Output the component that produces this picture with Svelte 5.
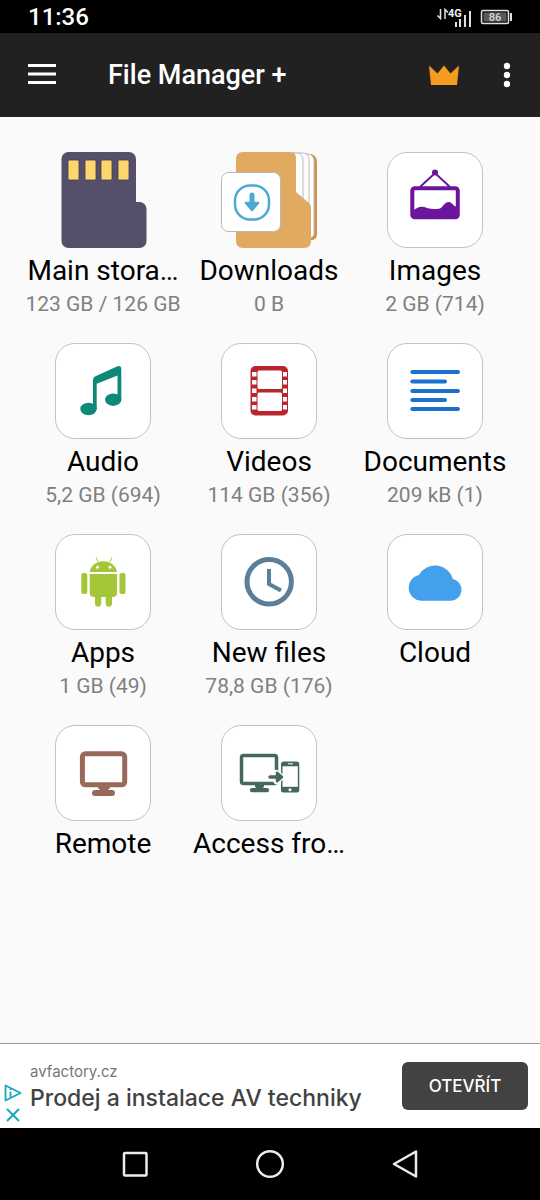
<script lang="ts">
  interface Category {
    id: string;
    label: string;
    info?: string;
    framed: boolean;
  }

  const categories: Category[] = [
    { id: 'storage', label: 'Main stora…', info: '123 GB / 126 GB', framed: false },
    { id: 'downloads', label: 'Downloads', info: '0 B', framed: false },
    { id: 'images', label: 'Images', info: '2 GB (714)', framed: true },
    { id: 'audio', label: 'Audio', info: '5,2 GB (694)', framed: true },
    { id: 'videos', label: 'Videos', info: '114 GB (356)', framed: true },
    { id: 'documents', label: 'Documents', info: '209 kB (1)', framed: true },
    { id: 'apps', label: 'Apps', info: '1 GB (49)', framed: true },
    { id: 'recent', label: 'New files', info: '78,8 GB (176)', framed: true },
    { id: 'cloud', label: 'Cloud', framed: true },
    { id: 'remote', label: 'Remote', framed: true },
    { id: 'access', label: 'Access fro…', framed: true },
  ];

  const contacts = [13, 30, 46, 63];
  const perforations = [29, 37, 45.5, 54, 62];
  const textLines = [
    { y: 29, end: 71 },
    { y: 38.5, end: 58 },
    { y: 48, end: 71 },
    { y: 57, end: 58 },
    { y: 66, end: 71 },
  ];
</script>

<div class="screen">
  <div class="status">
    <span class="time">11:36</span>
    <svg class="status-icons" viewBox="0 0 80 24" width="80" height="24">
      <g fill="none" stroke="#e6e6e6" stroke-width="1.5">
        <path d="M4.500 4v9.500l-3-3M9 14V4.500l3 3" />
      </g>
      <text x="12" y="12" class="network">4G</text>
      <g fill="#e0e0e0">
        <rect x="19" y="17" width="2" height="5" />
        <rect x="23" y="14" width="2" height="8" />
        <rect x="28" y="10" width="2" height="12" />
        <rect x="33" y="6" width="2" height="16" />
      </g>
      <rect x="45.500" y="5.500" width="27" height="13" rx="1.500" fill="#111" stroke="#e0e0e0" stroke-width="1.500" />
      <rect x="47.500" y="7.500" width="23" height="9" fill="#5a5a5a" />
      <rect x="74" y="8" width="2" height="8" fill="#e0e0e0" />
      <text x="59" y="16" text-anchor="middle" class="battery">86</text>
    </svg>
  </div>

  <header class="toolbar">
    <button class="tool" aria-label="Menu">
      <svg viewBox="0 0 28 28" width="28" height="28" fill="#fff">
        <path d="M0 3h28v3H0zM0 11.500h28v3H0zM0 20h28v3H0z" />
      </svg>
    </button>
    <h1>File Manager +</h1>
    <button class="tool" aria-label="Premium">
      <svg viewBox="0 0 32 28" width="32" height="28">
        <path d="M1 4.500l8.500 8L16 4.500l6.500 8 8.500-8-2 19.500H3z" fill="#f39c1f" />
      </svg>
    </button>
    <button class="tool more" aria-label="More options">
      <svg viewBox="0 0 8 28" width="8" height="28" fill="#fff">
        <circle cx="4" cy="5" r="3.200" />
        <circle cx="4" cy="14" r="3.200" />
        <circle cx="4" cy="23" r="3.200" />
      </svg>
    </button>
  </header>

  <main class="grid">
    {#each categories as category (category.id)}
      <button class="category">
        <span class="tile" class:framed={category.framed}>
          <svg viewBox="0 0 96 96" width="96" height="96">
            {#if category.id === 'storage'}
              <path d="M13.500 0H74a7 7 0 0 1 7 7v43h3.500a7 7 0 0 1 7 7v32a7 7 0 0 1-7 7h-71a7 7 0 0 1-7-7V7a7 7 0 0 1 7-7z" fill="#54506a" />
              {#each contacts as x}
                <rect {x} y="8" width="11" height="20" rx="1.500" fill="#ffd66b" stroke="#403c50" stroke-width="0.800" />
              {/each}
            {:else if category.id === 'downloads'}
              <path d="M72 2h18q6 2 6 8v72q0 6-6 6H72z" fill="#d09244" />
              <path d="M71 2h16q6 1 6 7v73q0 3-4 4H71z" fill="#fff" stroke="#b9b9c2" />
              <path d="M71 1h11q6 1 6 7v79H71z" fill="#fff" stroke="#b9b9c2" />
              <path d="M71 1h5q6 1 6 7v79H71z" fill="#fff" stroke="#b9b9c2" />
              <path d="M22 0h47q6 0 6 6v34l13 11q2 2 2 5v33q0 7-7 7H22q-7 0-7-7V7q0-7 7-7z" fill="#e0aa61" />
              <rect x="0.500" y="20.500" width="59" height="59" rx="7" fill="#fff" stroke="#b8b8bc" />
              <rect x="14" y="33.500" width="34" height="34" rx="15" fill="none" stroke="#4bacd1" stroke-width="2.500" />
              <path d="M31 43v9" stroke="#4bacd1" stroke-width="5" stroke-linecap="round" />
              <path d="M25 51h12l-6 7z" fill="#4bacd1" stroke="#4bacd1" stroke-width="2.500" stroke-linejoin="round" />
            {:else if category.id === 'images'}
              <g fill="none" stroke="#6a159c">
                <path d="M33 35l15-14 15 14" stroke-width="2" />
                <rect x="25.300" y="36.300" width="45.500" height="29" rx="2.500" stroke-width="4" />
              </g>
              <circle cx="48" cy="20.500" r="3" fill="#6a159c" />
              <path d="M26 59c3-3 7-5 11-4 4 1 6 2 10 2 4 0 6 0 8-2 2-3 4-5 7-5s4 4 8 5v10H26z" fill="#6a159c" />
            {:else if category.id === 'audio'}
              <g fill="#0b8a7a">
                <ellipse cx="33.500" cy="66" rx="8.200" ry="6.200" />
                <ellipse cx="58.200" cy="56.700" rx="8.200" ry="6.200" />
                <path d="M38 66V37q0-3 3-4l21-9.500q4.300-1.500 4.300 2.500v31h-3.800V32.500l-20.800 8.200V66z" />
              </g>
            {:else if category.id === 'videos'}
              <rect x="29.500" y="23" width="37.500" height="49.500" rx="5" fill="#b9252d" />
              <g fill="#fff">
                <rect x="36.500" y="27.500" width="24.500" height="18.500" rx="1.500" />
                <rect x="36.500" y="49.500" width="24.500" height="18.500" rx="1.500" />
                {#each perforations as y}
                  <rect x="31" {y} width="4.500" height="4.500" />
                  <rect x="62" {y} width="4" height="4.500" />
                {/each}
              </g>
            {:else if category.id === 'documents'}
              <g stroke="#1a72cf" stroke-width="4" stroke-linecap="round">
                {#each textLines as line}
                  <path d="M25.300 {line.y}H{line.end}" />
                {/each}
              </g>
            {:else if category.id === 'apps'}
              <g fill="#a4c639">
                <path d="M34.700 38a13.700 11.700 0 0 1 27.300 0z" />
                <path d="M34.700 40H62v19q0 4-4 4h-1v6.500a3 3 0 0 1-6.300 0V63h-4.500v6.500a3 3 0 0 1-6.200 0V63h-1.300q-4 0-4-4z" />
                <rect x="26.300" y="39" width="6" height="21" rx="2" />
                <rect x="64.500" y="39" width="6" height="21" rx="2" />
              </g>
              <path d="M41 23.500l2 4M57 23.500l-2 4" stroke="#a4c639" stroke-width="1" />
              <circle cx="42.500" cy="33.300" r="1.500" fill="#fff" />
              <circle cx="55" cy="33.300" r="1.500" fill="#fff" />
            {:else if category.id === 'recent'}
              <g fill="none" stroke="#5b7f99">
                <circle cx="48.200" cy="47.700" r="22.200" stroke-width="5" />
                <path d="M48 35v15l12 6.500" stroke-width="4" />
              </g>
            {:else if category.id === 'cloud'}
              <path d="M34 66.700a13 13 0 0 1-2-25.700a18.500 18.500 0 0 1 34 4a11 11 0 0 1-2 21.700z" fill="#42a0ec" />
            {:else if category.id === 'remote'}
              <rect x="27.400" y="28.800" width="42.300" height="31" rx="3" fill="none" stroke="#986958" stroke-width="5" />
              <path d="M43 61h12v2l-2 2h4a3 3 0 0 1 0 6H40a3 3 0 0 1 0-6h5l-2-2z" fill="#986958" />
            {:else}
              <rect x="20.500" y="30.500" width="35" height="28" rx="2" fill="none" stroke="#45685c" stroke-width="3.500" />
              <path d="M34 60h9v1.500l-1 1.500h4a2.100 2.100 0 0 1 0 4.300H31a2.100 2.100 0 0 1 0-4.300h4l-1-1.500z" fill="#45685c" />
              <rect x="58" y="35" width="22" height="34" rx="3" fill="#fff" />
              <rect x="60" y="36.500" width="18.300" height="31" rx="2.500" fill="#45685c" />
              <rect x="61.500" y="41.300" width="15.300" height="20.500" fill="#fff" />
              <path d="M67 38.800h5" stroke="#fff" stroke-width="1" />
              <circle cx="69" cy="64.700" r="1.500" fill="#fff" />
              <path d="M49 52h6M55.500 47.800l5 4.200-5 4.200z" fill="#45685c" stroke="#fff" stroke-width="6" stroke-linejoin="round" stroke-linecap="round" />
              <path d="M49 52h7" stroke="#45685c" stroke-width="3.400" stroke-linecap="round" />
              <path d="M56 47.800l5 4.200-5 4.200z" fill="#45685c" stroke="#45685c" stroke-width="2.500" stroke-linejoin="round" />
            {/if}
          </svg>
        </span>
        <span class="label">{category.label}</span>
        {#if category.info}
          <span class="info">{category.info}</span>
        {/if}
      </button>
    {/each}
  </main>

  <aside class="ad">
    <div class="ad-choices">
      <button aria-label="Ad choices">
        <svg viewBox="0 0 18 18" width="18" height="18" fill="none" stroke="#18a5c0" stroke-width="1.800" stroke-linejoin="round">
          <path d="M1.500 1.500l15 7.500-15 7.500z" />
          <path d="M6.500 7.500v6M6.500 4.500v1.500" />
        </svg>
      </button>
      <button aria-label="Close ad">
        <svg viewBox="0 0 18 18" width="18" height="18" fill="none" stroke="#18a5c0" stroke-width="2">
          <path d="M3 3l12 12M15 3L3 15" />
        </svg>
      </button>
    </div>
    <div class="ad-text">
      <span class="ad-site">avfactory.cz</span>
      <span class="ad-title">Prodej a instalace AV techniky</span>
    </div>
    <button class="ad-open">OTEVŘÍT</button>
  </aside>

  <nav class="system-nav">
    <button aria-label="Recent apps">
      <svg viewBox="0 0 30 30" width="30" height="30" fill="none" stroke="#ececec" stroke-width="2.500">
        <rect x="4" y="4" width="22.500" height="22.500" rx="1" />
      </svg>
    </button>
    <button aria-label="Home">
      <svg viewBox="0 0 30 30" width="30" height="30" fill="none" stroke="#ececec" stroke-width="2.500">
        <circle cx="15" cy="15" r="12.800" />
      </svg>
    </button>
    <button aria-label="Back">
      <svg viewBox="0 0 30 30" width="30" height="30" fill="none" stroke="#ececec" stroke-width="2.500" stroke-linejoin="round">
        <path d="M26 2.500v25L4 15z" />
      </svg>
    </button>
  </nav>
</div>

<style>
  :global(body) {
    background: #fafafa;
  }

  .screen {
    display: flex;
    flex-direction: column;
    min-height: 100vh;
    background: #fafafa;
    color: #000;
    font-family: Roboto, "Liberation Sans", sans-serif;
  }

  button {
    display: flex;
    align-items: center;
    justify-content: center;
    padding: 0;
    border: 0;
    background: none;
    color: inherit;
    font: inherit;
    cursor: pointer;
  }

  svg {
    display: block;
  }

  .status {
    display: flex;
    align-items: center;
    justify-content: space-between;
    height: 33px;
    padding: 0 24px 0 28px;
    background: #000;
    color: #fff;
  }

  .time {
    font-size: 24px;
    font-weight: 500;
    line-height: 32px;
  }

  .network {
    fill: #f0f0f0;
    font-size: 11px;
    font-weight: 700;
  }

  .battery {
    fill: #d8d8d8;
    font-size: 11px;
    font-weight: 500;
  }

  .toolbar {
    display: flex;
    align-items: center;
    height: 84px;
    padding: 0 29px 0 28px;
    background: #212121;
    color: #fff;
  }

  .toolbar h1 {
    flex: 1;
    margin: 0 0 0 52px;
    font-size: 27px;
    font-weight: 500;
    line-height: 32px;
  }

  .more {
    margin-left: 43px;
  }

  .grid {
    display: grid;
    flex: 1;
    grid-template-columns: repeat(3, 1fr);
    align-content: start;
    row-gap: 23px;
    padding: 35px 22px 20px 20px;
  }

  .category {
    flex-direction: column;
    justify-content: flex-start;
  }

  .tile {
    box-sizing: border-box;
    width: 96px;
    height: 96px;
  }

  .framed {
    border: 1px solid #c2c2c2;
    border-radius: 20px;
    background: #fff;
  }

  .framed svg {
    margin: -1px;
  }

  .label {
    margin-top: 6px;
    font-size: 28px;
    line-height: 34px;
    white-space: nowrap;
  }

  .info {
    color: #808080;
    font-size: 21px;
    line-height: 32px;
    white-space: nowrap;
  }

  .ad {
    display: flex;
    align-items: center;
    height: 84px;
    padding-right: 12px;
    border-top: 1px solid #9a9a9a;
    background: #fff;
    color: #424242;
    font-family: Inter, Roboto, sans-serif;
  }

  .ad-choices {
    display: flex;
    flex-direction: column;
    align-self: flex-end;
    gap: 4px;
    width: 30px;
    padding: 0 0 4px 4px;
    box-sizing: border-box;
  }

  .ad-choices button {
    justify-content: flex-start;
  }

  .ad-text {
    display: flex;
    flex: 1;
    flex-direction: column;
    min-width: 0;
    white-space: nowrap;
  }

  .ad-site {
    color: #777;
    font-size: 15px;
    line-height: 24px;
  }

  .ad-title {
    font-size: 23px;
    font-weight: 500;
    line-height: 28px;
  }

  .ad-open {
    width: 126px;
    height: 48px;
    border-radius: 6px;
    background: #424242;
    color: #fff;
    font-size: 17px;
    font-weight: 500;
  }

  .system-nav {
    display: grid;
    grid-template-columns: repeat(3, 1fr);
    height: 72px;
    padding: 0 12.5%;
    background: #000;
  }
</style>
